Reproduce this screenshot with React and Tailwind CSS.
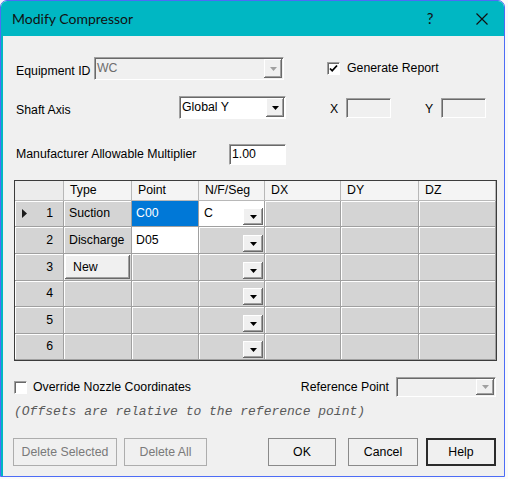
import React from 'react';

// Windows-classic style "Modify Compressor" dialog

const sunken = 'border border-[#a0a0a0] border-b-white border-r-white shadow-[inset_1px_1px_0_#696969]';
const raised = 'bg-[#f0f0f0] shadow-[inset_-1px_-1px_0_#696969,inset_1px_1px_0_#ffffff,inset_-2px_-2px_0_#a0a0a0]';

const Arrow = ({ disabled }) => (
  <svg width="7" height="4" viewBox="0 0 7 4">
    <path d="M0 0h7L3.5 4z" fill={disabled ? '#a0a0a0' : '#000'} />
  </svg>
);

const DropBtn = ({ disabled, className = '' }) => (
  <div className={`flex items-center justify-center ${raised} ${className}`}>
    <Arrow disabled={disabled} />
  </div>
);

const Combo = ({ value, disabled, className }) => (
  <div className={`flex items-stretch ${sunken} ${disabled ? 'bg-[#f0f0f0] text-[#6d6d6d]' : 'bg-white text-black'} ${className}`}>
    <span className="flex-1 flex items-center pl-[2px]">{value}</span>
    <DropBtn disabled={disabled} className="w-[18px] m-[1px]" />
  </div>
);

const Check = ({ checked }) => (
  <div className={`w-[13px] h-[13px] bg-white ${sunken} flex items-center justify-center`}>
    {checked && (
      <svg width="9" height="9" viewBox="0 0 9 9">
        <path d="M1 4.5l2.2 2.3L8 1.5" stroke="#000" strokeWidth="1.8" fill="none" />
      </svg>
    )}
  </div>
);

const cols = 'grid grid-cols-[49px_68px_67px_66px_76px_78px_77px]';
const cell = 'border-r border-b border-[#a0a0a0] shadow-[inset_1px_1px_0_#ffffff]';
const rowHeights = ['h-[26px]', 'h-[27px]', 'h-[27px]', 'h-[26px]', 'h-[27px]', 'h-[26px]'];

const rows = [
  { type: 'Suction', point: 'C00', selected: true, nfs: 'C', nfsWhite: true },
  { type: 'Discharge', point: 'D05', pointWhite: true },
  { newBtn: true },
  {},
  {},
  {},
];

const Button = ({ children, className = '', disabled, primary }) => (
  <button
    className={`h-[28px] bg-[#f0f0f0] ${primary ? 'border-2 border-[#2b2b2b]' : 'border border-[#8a8a8a]'} ${disabled ? 'text-[#7a7a7a] border-[#adadad]' : 'text-black'} ${className}`}
  >
    {children}
  </button>
);

export default function App() {
  return (
    <div className="w-[508px] h-[479px] bg-[#fafafa]" style={{ fontFamily: '"Liberation Sans", Arial, sans-serif' }}>
      <div className="w-[505px] h-[477px] flex flex-col border border-[#4d6cf5] rounded-t-[7px] overflow-hidden">
        {/* Title bar */}
        <div className="h-[35px] shrink-0 bg-[#00b7c3] flex items-center pl-[11px] text-[#111]">
          <span className="flex-1 text-[14px]" style={{ fontFamily: 'Lato, sans-serif' }}>Modify Compressor</span>
          <span className="text-[15px] w-[12px] text-center mr-[40px]" style={{ fontFamily: 'Lato, sans-serif' }}>?</span>
          <svg width="12" height="12" viewBox="0 0 12 12" className="mr-[16px]">
            <path d="M0.5 0.5l11 11M11.5 0.5l-11 11" stroke="#111" strokeWidth="1.2" />
          </svg>
        </div>

        {/* Body */}
        <div className="flex-1 bg-[#f0f0f0] border-l-2 border-[#00b7c3] pl-[10px] text-[12.3px] text-black">
          {/* Equipment ID */}
          <div className="flex items-center h-[23px] mt-[21px] pl-[3px]">
            <span className="w-[78px] mt-[5px]">Equipment ID</span>
            <Combo value="WC" disabled className="w-[190px] h-[23px]" />
            <div className="ml-[43px]"><Check checked /></div>
            <span className="ml-[7px]">Generate Report</span>
          </div>

          {/* Shaft Axis */}
          <div className="flex items-center h-[23px] mt-[16px] pl-[3px]">
            <span className="w-[163px] mt-[5px]">Shaft Axis</span>
            <Combo value="Global Y" className="w-[107px] h-[23px]" />
            <span className="ml-[44px] w-[16px] mt-[4px]">X</span>
            <div className={`w-[45px] h-[20px] bg-[#f0f0f0] ${sunken}`} />
            <span className="ml-[34px] w-[16px] mt-[4px]">Y</span>
            <div className={`w-[45px] h-[20px] bg-[#f0f0f0] ${sunken}`} />
          </div>

          {/* Multiplier */}
          <div className="flex items-center h-[21px] mt-[25px] pl-[3px]">
            <span className="w-[213px]">Manufacturer Allowable Multiplier</span>
            <div className={`w-[57px] h-[21px] bg-white ${sunken} flex items-center pl-[2px]`}>1.00</div>
          </div>

          {/* Grid */}
          <div className="mt-[15px] ml-[1px] w-[483px] border border-[#3c3c3c]">
            <div className={`${cols} h-[20px] bg-[#f4f4f4]`}>
              {['', 'Type', 'Point', 'N/F/Seg', 'DX', 'DY', 'DZ'].map((h, i) => (
                <div key={i} className={`border-r border-b border-[#b8b8b8] flex items-center ${i === 0 ? 'bg-[#ececec]' : 'pl-[6px]'}`}>
                  {h}
                </div>
              ))}
            </div>
            {rows.map((r, i) => (
              <div key={i} className={`${cols} ${rowHeights[i]}`}>
                <div className={`${cell} bg-[#d4d4d4] flex items-center pr-[10px]`}>
                  {i === 0 && (
                    <svg width="5" height="9" viewBox="0 0 5 9" className="ml-[7px]">
                      <path d="M0 0l5 4.5L0 9z" fill="#1a1a1a" />
                    </svg>
                  )}
                  <span className="ml-auto">{i + 1}</span>
                </div>
                <div className={`${cell} bg-[#d4d4d4] flex items-center ${r.newBtn ? 'p-[1px]' : 'pl-[5px]'}`}>
                  {r.newBtn ? (
                    <div className={`w-full h-full flex items-center pl-[8px] ${raised} bg-[#dedede]`}>New</div>
                  ) : (
                    r.type
                  )}
                </div>
                <div
                  className={`border-r border-b border-[#a0a0a0] flex items-center pl-[4px] ${
                    r.selected ? 'bg-[#0078d7] text-white' : r.pointWhite ? 'bg-white' : `bg-[#d4d4d4] ${cell}`
                  }`}
                >
                  {r.point}
                </div>
                <div className={`border-r border-b border-[#a0a0a0] flex items-end ${r.nfsWhite ? 'bg-white' : `bg-[#d4d4d4] ${cell}`}`}>
                  <span className="flex-1 self-center pl-[5px]">{r.nfs}</span>
                  <DropBtn className="w-[20px] h-[17px] mb-[1px] mr-[1px]" />
                </div>
                <div className={`${cell} bg-[#d4d4d4]`} />
                <div className={`${cell} bg-[#d4d4d4]`} />
                <div className={`${cell} bg-[#d4d4d4]`} />
              </div>
            ))}
          </div>

          {/* Override / reference point */}
          <div className="flex items-center h-[20px] mt-[16px] pl-[1px]">
            <Check />
            <span className="ml-[6px]">Override Nozzle Coordinates</span>
            <span className="ml-auto mr-[7px]">Reference Point</span>
            <Combo disabled className="w-[100px] h-[20px] mr-[8px]" />
          </div>
          <div
            className="mt-[8px] pl-[1px] h-[14px] leading-[14px] text-[13px] italic text-[#5a5a5a]"
            style={{ fontFamily: '"Liberation Mono", "Courier New", monospace' }}
          >
            (Offsets are relative to the reference point)
          </div>

          {/* Buttons */}
          <div className="flex items-center mt-[19px]">
            <Button disabled className="w-[104px]">Delete Selected</Button>
            <Button disabled className="w-[83px] ml-[7px]">Delete All</Button>
            <Button className="w-[68px] ml-[61px]">OK</Button>
            <Button className="w-[70px] ml-[12px]">Cancel</Button>
            <Button primary className="w-[70px] ml-[8px]">Help</Button>
          </div>
        </div>
      </div>
    </div>
  );
}
